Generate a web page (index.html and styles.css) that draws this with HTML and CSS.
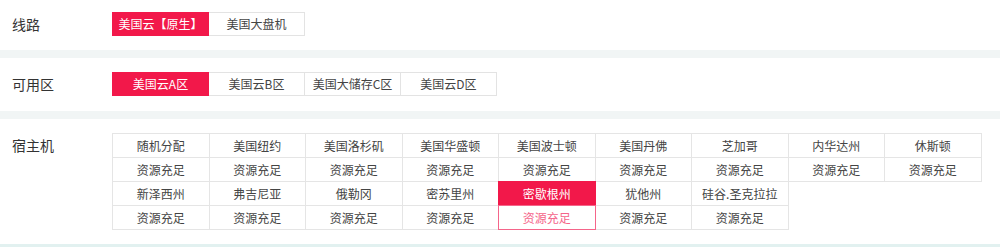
FILE: index.html
```html
<!DOCTYPE html>
<html lang="zh-CN">
<head>
    <meta charset="UTF-8">
    <title>选择线路</title>
    <link rel="stylesheet" href="styles.css">
</head>
<body>
    <div class="section section-line">
        <div class="label">线路</div>
        <div class="options">
            <span class="opt active">美国云【原生】</span>
            <span class="opt">美国大盘机</span>
        </div>
    </div>

    <div class="section section-zone">
        <div class="label">可用区</div>
        <div class="options">
            <span class="opt active">美国云A区</span>
            <span class="opt">美国云B区</span>
            <span class="opt">美国大储存C区</span>
            <span class="opt">美国云D区</span>
        </div>
    </div>

    <div class="section section-host">
        <div class="label">宿主机</div>
        <div class="hosts">
            <div class="host"><div class="cell name">随机分配</div><div class="cell stock">资源充足</div></div>
            <div class="host"><div class="cell name">美国纽约</div><div class="cell stock">资源充足</div></div>
            <div class="host"><div class="cell name">美国洛杉矶</div><div class="cell stock">资源充足</div></div>
            <div class="host"><div class="cell name">美国华盛顿</div><div class="cell stock">资源充足</div></div>
            <div class="host"><div class="cell name">美国波士顿</div><div class="cell stock">资源充足</div></div>
            <div class="host"><div class="cell name">美国丹佛</div><div class="cell stock">资源充足</div></div>
            <div class="host"><div class="cell name">芝加哥</div><div class="cell stock">资源充足</div></div>
            <div class="host"><div class="cell name">内华达州</div><div class="cell stock">资源充足</div></div>
            <div class="host"><div class="cell name">休斯顿</div><div class="cell stock">资源充足</div></div>
            <div class="host"><div class="cell name">新泽西州</div><div class="cell stock">资源充足</div></div>
            <div class="host"><div class="cell name">弗吉尼亚</div><div class="cell stock">资源充足</div></div>
            <div class="host"><div class="cell name">俄勒冈</div><div class="cell stock">资源充足</div></div>
            <div class="host"><div class="cell name">密苏里州</div><div class="cell stock">资源充足</div></div>
            <div class="host active"><div class="cell name">密歇根州</div><div class="cell stock">资源充足</div></div>
            <div class="host"><div class="cell name">犹他州</div><div class="cell stock">资源充足</div></div>
            <div class="host"><div class="cell name">硅谷.圣克拉拉</div><div class="cell stock">资源充足</div></div>
        </div>
    </div>
    <div class="band band-last"></div>
</body>
</html>
```

FILE: styles.css
```css
* {
    margin: 0;
    padding: 0;
    box-sizing: border-box;
}

body {
    font-family: "Noto Sans CJK SC", "Noto Sans", sans-serif;
    background: #fff;
    color: #333;
    width: 1000px;
    overflow: hidden;
}

.section {
    display: flex;
    align-items: flex-start;
    padding-left: 12px;
    border-bottom: 8px solid #f1f5f5;
}

.section-line {
    height: 58px;
    padding-top: 12px;
}

.section-zone {
    height: 61px;
    padding-top: 14px;
}

.section-host {
    height: 125px;
    padding-top: 14px;
    border-bottom: none;
}

.band-last {
    height: 8px;
    background: #e2f1f0;
}

.label {
    width: 100px;
    font-size: 14px;
    line-height: 24px;
    color: #333;
}

.section-host .label {
    line-height: 25px;
}

.options {
    display: flex;
}

.opt {
    display: block;
    width: 97px;
    height: 24px;
    line-height: 22px;
    border: 1px solid #e3e3e3;
    margin-right: -1px;
    font-size: 12px;
    text-align: center;
    color: #444;
    background: #fff;
}

.opt.active {
    background: #f2184a;
    border-color: #f2184a;
    color: #fff;
    position: relative;
}

.hosts {
    display: grid;
    grid-template-columns: repeat(9, 96.5px);
}

.host {
    display: flex;
    flex-direction: column;
    margin-right: -1px;
    margin-bottom: -1px;
}

.cell {
    height: 25px;
    line-height: 23px;
    border: 1px solid #e5e5e5;
    font-size: 12px;
    text-align: center;
    color: #444;
    background: #fff;
    white-space: nowrap;
}

.cell.stock {
    margin-top: -1px;
}

.host.active {
    position: relative;
    z-index: 1;
}

.host.active .name {
    background: #f2184a;
    border-color: #f2184a;
    color: #fff;
}

.host.active .stock {
    border-color: #f5658a;
    color: #f5658a;
}
```
